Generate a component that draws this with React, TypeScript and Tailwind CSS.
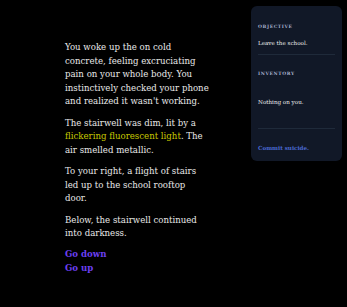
import React from "react";

export default function App() {
  return (
    <div className="w-[347px] h-[307px] bg-black relative overflow-hidden" style={{ fontFamily: '"DejaVu Serif", Georgia, serif' }}>
      <div className="ml-[65px] pt-[41px] w-[146px] text-[8.6px] leading-[13.6px] text-[#e8e8e8]">
        <p>You woke up the on cold concrete, feeling excruciating pain on your whole body. You instinctively checked your phone and realized it wasn't working.</p>
        <p className="mt-[7.7px]">The stairwell was dim, lit by a <span className="text-[#c8c800]">flickering fluorescent light</span>. The air smelled metallic.</p>
        <p className="mt-[7.7px]">To your right, a flight of stairs led up to the school rooftop<br />door.</p>
        <p className="mt-[7.7px]">Below, the stairwell continued into darkness.</p>
        <div className="mt-[7.7px] flex flex-col font-bold text-[#6b3ff2]">
          <span>Go down</span>
          <span>Go up</span>
        </div>
      </div>
      <div className="absolute left-[251px] top-[6px] w-[91px] h-[155px] rounded-[6px] bg-[#111827] px-[7px] pt-[18px] flex flex-col">
        <div className="text-[4.5px] tracking-[0.6px] font-bold text-[#a3adc8] leading-[6px]">OBJECTIVE</div>
        <div className="mt-[10px] text-[5.6px] leading-[7px] text-[#f0f0f0]">Leave the school.</div>
        <div className="mt-[7px] h-px bg-[#1f2a3a]"></div>
        <div className="mt-[16px] text-[4.5px] tracking-[0.6px] font-bold text-[#a3adc8] leading-[6px]">INVENTORY</div>
        <div className="mt-[22px] text-[5.6px] leading-[7px] text-[#f0f0f0]">Nothing on you.</div>
        <div className="mt-[22px] h-px bg-[#1f2a3a]"></div>
        <div className="mt-[16px] text-[5.6px] leading-[7px] font-bold text-[#4a68d0]">Commit suicide.</div>
      </div>
    </div>
  );
}
